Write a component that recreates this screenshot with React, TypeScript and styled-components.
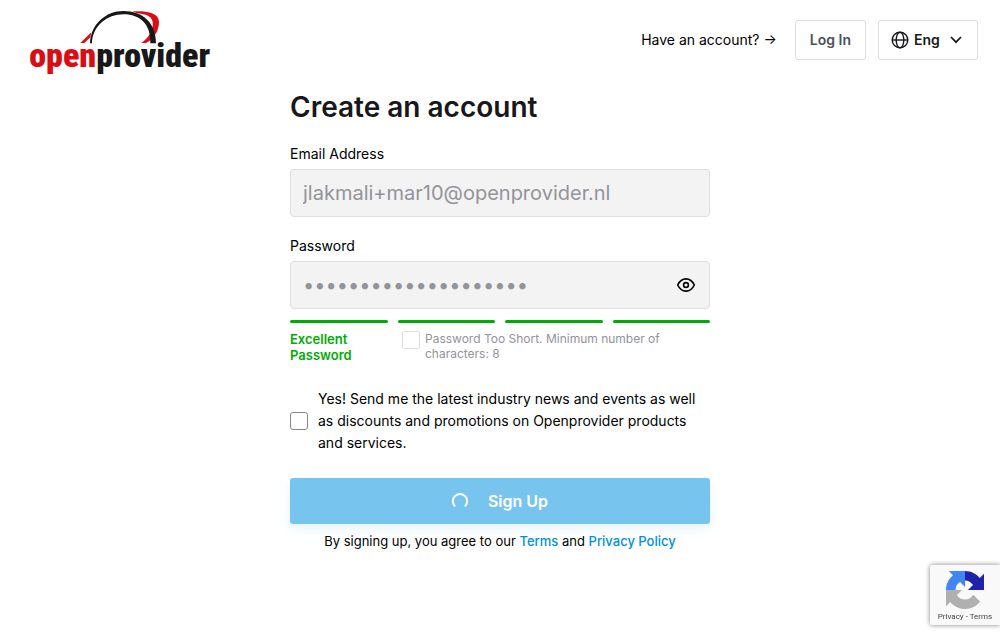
import React from "react";
import styled, { createGlobalStyle } from "styled-components";

const GlobalStyle = createGlobalStyle`
  * { box-sizing: border-box; }
  body {
    margin: 0;
    background: #fff;
    color: #000;
    font-family: Inter, "Liberation Sans", sans-serif;
    font-size: 14px;
  }
`;

const Header = styled.header`
  display: flex;
  justify-content: space-between;
  align-items: flex-start;
  padding: 0 22px 0 20px;
`;

const LogoLink = styled.a`
  display: block;
  line-height: 0;
`;

const Actions = styled.nav`
  display: flex;
  align-items: center;
  gap: 12px;
  padding-top: 20px;
`;

const AccountHint = styled.span`
  margin-right: 6px;
  line-height: 20px;
`;

const LoginButton = styled.button`
  height: 40px;
  padding: 0 14px;
  border: 1px solid #dedee0;
  border-radius: 3px;
  background: #fff;
  color: #4f4f55;
  font: 600 14px/20px Inter, "Liberation Sans", sans-serif;
`;

const LanguagePicker = styled.label`
  display: flex;
  align-items: center;
  height: 40px;
  padding: 0 13px 0 12px;
  border: 1px solid #dedee0;
  border-radius: 3px;
  color: #18181b;
`;

const LanguageSelect = styled.select`
  appearance: none;
  margin: 0 8px 0 5px;
  padding: 0;
  border: 0;
  background: none;
  color: inherit;
  font: 600 14px/20px Inter, "Liberation Sans", sans-serif;
`;

const Main = styled.main`
  width: 100%;
  max-width: 420px;
  margin: 0 auto;
`;

const Title = styled.h1`
  margin: 4px 0 19px;
  color: #18181b;
  font-size: 28px;
  font-weight: 600;
  line-height: 36px;
`;

const Field = styled.div`
  display: flex;
  flex-direction: column;
  gap: 5px;
  margin-bottom: 19px;
`;

const FieldLabel = styled.label`
  line-height: 20px;
`;

const InputBox = styled.div`
  display: flex;
  align-items: center;
  height: 48px;
  padding: 0 13px 0 12px;
  border: 1px solid #dedee0;
  border-radius: 4px;
  background: #f3f3f3;
`;

const TextInput = styled.input`
  flex: 1;
  min-width: 0;
  padding: 0;
  border: 0;
  outline: 0;
  background: none;
  color: #93939a;
  font: 400 20px/24px Inter, "Liberation Sans", sans-serif;
`;

const IconButton = styled.button`
  display: flex;
  padding: 0;
  border: 0;
  background: none;
  color: #000;
`;

const StrengthMeter = styled.div`
  display: grid;
  grid-template-columns: repeat(4, 1fr);
  gap: 10px;
  margin-top: -8px;
`;

const StrengthBar = styled.span`
  height: 3px;
  border-radius: 2px;
  background: #00ab07;
`;

const StrengthInfo = styled.div`
  display: flex;
  align-items: flex-start;
  gap: 28px;
  margin-top: 8px;
`;

const StrengthText = styled.strong`
  width: 84px;
  color: #00ab07;
  font-size: 13px;
  font-weight: 600;
  line-height: 16px;
`;

const Rule = styled.label`
  display: flex;
  flex: 1;
  align-items: flex-start;
  gap: 5px;
  color: #93939a;
  font-size: 12px;
  line-height: 15px;
`;

const Checkbox = styled.input<{ $muted?: boolean }>`
  appearance: none;
  flex: none;
  width: 18px;
  height: 18px;
  margin: 0;
  border: 1px solid ${(p) => (p.$muted ? "#dedee0" : "#85858c")};
  border-radius: ${(p) => (p.$muted ? "2px" : "3px")};
  background: #fff;
`;

const Consent = styled.label`
  display: flex;
  align-items: center;
  gap: 10px;
  margin: 25px 0 24px;
  line-height: 22px;
`;

const SubmitButton = styled.button`
  display: flex;
  align-items: center;
  justify-content: center;
  gap: 20px;
  width: 100%;
  height: 46px;
  border: 0;
  border-radius: 3px;
  background: #77c5ee;
  box-shadow: 0 4px 12px #e3f2fd;
  color: #fff;
  font: 600 16px/24px Inter, "Liberation Sans", sans-serif;
`;

const Legal = styled.p`
  margin: 7px 0 0;
  font-size: 13px;
  line-height: 20px;
  text-align: center;
`;

const LegalLink = styled.a`
  color: #0090d9;
  font-weight: 500;
  text-decoration: none;
`;

const CaptchaBadge = styled.aside`
  position: fixed;
  right: 0;
  bottom: 14px;
  display: flex;
  flex-direction: column;
  align-items: center;
  gap: 3px;
  width: 70px;
  height: 60px;
  padding-top: 6px;
  border-radius: 2px 0 0 2px;
  background: #f9f9f9;
  box-shadow: 0 0 5px gray;
  color: #444;
  font: 400 8px/10px Roboto, sans-serif;
`;

const CaptchaLink = styled.a`
  color: inherit;
  text-decoration: none;
`;

const Logo = () => (
  <svg width="200" height="85" viewBox="0 0 600 255" role="img" aria-label="openprovider">
    <g fill="#d90d14">
      <path d="M338 34C380 32 417 38 417 66C417 94 398 122 377 129L364 129C386 114 401 90 398 66C395 46 372 42 350 40Z" />
      <path d="M181 129L214 97L211 112L193 129Z" />
    </g>
    <path
      fill="#181818"
      d="M210 130C212 72 258 33 310 33C368 33 408 68 408 130L391 130C393 74 362 43 310 43C262 43 217 78 216 130Z"
    />
    <text
      x="28"
      y="200"
      fontFamily="'Roboto Condensed', Roboto, sans-serif"
      fontSize="102"
      fontWeight="900"
      fill="#181818"
    >
      <tspan fill="#d90d14">open</tspan>provider
    </text>
  </svg>
);

const Globe = () => (
  <svg width="18" height="18" viewBox="0 0 18 18" fill="none" stroke="currentColor" strokeWidth="1.4">
    <circle cx="9" cy="9" r="7.8" />
    <ellipse cx="9" cy="9" rx="3.8" ry="7.8" />
    <path d="M1.3 9H16.7" />
  </svg>
);

const Chevron = () => (
  <svg width="16" height="16" viewBox="0 0 16 16" fill="none" stroke="currentColor" strokeWidth="1.7">
    <path d="M3 5L8 10.2L13 5" />
  </svg>
);

const Eye = () => (
  <svg width="20" height="20" viewBox="0 0 20 20" fill="none" stroke="currentColor" strokeWidth="1.6">
    <path d="M1.7 10C3.6 6 6.4 3.9 10 3.9S16.4 6 18.3 10C16.4 14 13.6 16.1 10 16.1S3.6 14 1.7 10Z" />
    <circle cx="10" cy="10" r="2.4" />
  </svg>
);

const Spinner = () => (
  <svg width="16" height="16" viewBox="0 0 16 16" fill="none" stroke="#fff" strokeWidth="2">
    <path d="M3.1 13.2A7.1 7.1 0 1 1 12.9 13.2" />
  </svg>
);

const Captcha = () => (
  <svg width="38" height="38" viewBox="0 0 64 64" aria-hidden="true">
    <path fill="#1f22ab" d="M64 32H37L45.5 23.7C42.5 18.8 38 16 32 16V0C42 0 51 4.6 56.8 11.8L64 4.7Z" />
    <path fill="#4285f4" d="M32 0V27L23.7 18.5C18.8 21.5 16 26 16 32H0C0 22 4.6 13 11.8 7.2L4.7 0Z" />
    <path
      fill="#b0b0b0"
      d="M0 32H27L18.5 40.3C21.5 45.2 26 48 32 48C38 48 42.6 45.5 45.6 39.8L57.4 51.4C51.6 59.1 42.4 64 32 64C22 64 13 59.4 7.2 52.2L0 59.3Z"
    />
  </svg>
);

export default function App() {
  return (
    <>
      <GlobalStyle />
      <Header>
        <LogoLink href="#home">
          <Logo />
        </LogoLink>
        <Actions>
          <AccountHint>Have an account? →</AccountHint>
          <LoginButton type="button">Log In</LoginButton>
          <LanguagePicker>
            <Globe />
            <LanguageSelect aria-label="Language" defaultValue="en">
              <option value="en">Eng</option>
            </LanguageSelect>
            <Chevron />
          </LanguagePicker>
        </Actions>
      </Header>
      <Main>
        <Title>Create an account</Title>
        <form>
          <Field>
            <FieldLabel htmlFor="email">Email Address</FieldLabel>
            <InputBox>
              <TextInput id="email" type="email" defaultValue="jlakmali+mar10@openprovider.nl" readOnly />
            </InputBox>
          </Field>
          <Field>
            <FieldLabel htmlFor="password">Password</FieldLabel>
            <InputBox>
              <TextInput id="password" type="password" defaultValue="aaaaaaaaaaaaaaaaaaaa" readOnly />
              <IconButton type="button" aria-label="Show password">
                <Eye />
              </IconButton>
            </InputBox>
          </Field>
          <StrengthMeter>
            <StrengthBar />
            <StrengthBar />
            <StrengthBar />
            <StrengthBar />
          </StrengthMeter>
          <StrengthInfo>
            <StrengthText>Excellent Password</StrengthText>
            <Rule>
              <Checkbox type="checkbox" $muted />
              <span>Password Too Short. Minimum number of characters: 8</span>
            </Rule>
          </StrengthInfo>
          <Consent>
            <Checkbox type="checkbox" />
            <span>
              Yes! Send me the latest industry news and events as well as discounts and promotions on Openprovider
              products and services.
            </span>
          </Consent>
          <SubmitButton type="button">
            <Spinner />
            Sign Up
          </SubmitButton>
          <Legal>
            By signing up, you agree to our <LegalLink href="#terms">Terms</LegalLink> and{" "}
            <LegalLink href="#privacy">Privacy Policy</LegalLink>
          </Legal>
        </form>
      </Main>
      <CaptchaBadge>
        <Captcha />
        <span>
          <CaptchaLink href="#captcha-privacy">Privacy</CaptchaLink> -{" "}
          <CaptchaLink href="#captcha-terms">Terms</CaptchaLink>
        </span>
      </CaptchaBadge>
    </>
  );
}
